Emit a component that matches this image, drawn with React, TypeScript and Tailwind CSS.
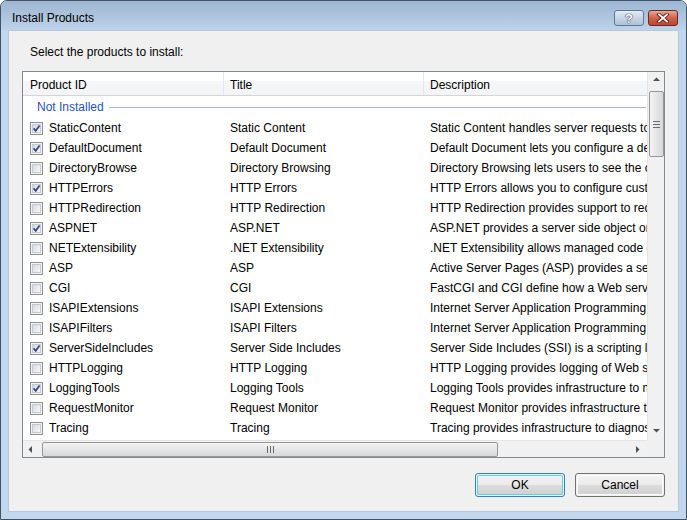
import React from 'react'

type Row = [string, string, string, boolean]

const rows: Row[] = [
  ['StaticContent', 'Static Content', 'Static Content handles server requests to static files', true],
  ['DefaultDocument', 'Default Document', 'Default Document lets you configure a default file', true],
  ['DirectoryBrowse', 'Directory Browsing', 'Directory Browsing lets users to see the contents', false],
  ['HTTPErrors', 'HTTP Errors', 'HTTP Errors allows you to configure custom error messages', true],
  ['HTTPRedirection', 'HTTP Redirection', 'HTTP Redirection provides support to redirect requests', false],
  ['ASPNET', 'ASP.NET', 'ASP.NET provides a server side object oriented environment', true],
  ['NETExtensibility', '.NET Extensibility', '.NET Extensibility allows managed code developers', false],
  ['ASP', 'ASP', 'Active Server Pages (ASP) provides a server side scripting', false],
  ['CGI', 'CGI', 'FastCGI and CGI define how a Web server passes data', false],
  ['ISAPIExtensions', 'ISAPI Extensions', 'Internet Server Application Programming Interface', false],
  ['ISAPIFilters', 'ISAPI Filters', 'Internet Server Application Programming Interface', false],
  ['ServerSideIncludes', 'Server Side Includes', 'Server Side Includes (SSI) is a scripting language', true],
  ['HTTPLogging', 'HTTP Logging', 'HTTP Logging provides logging of Web site activity', false],
  ['LoggingTools', 'Logging Tools', 'Logging Tools provides infrastructure to manage logs', true],
  ['RequestMonitor', 'Request Monitor', 'Request Monitor provides infrastructure to monitor', false],
  ['Tracing', 'Tracing', 'Tracing provides infrastructure to diagnose problems', false],
]

function Check({ on }: { on: boolean }) {
  return (
    <span className="block w-[13px] h-[13px] shrink-0 border border-[#8e8f8f] bg-[#f4f4f4] p-px">
      <span className="block w-full h-full border border-[#c6c9cf] bg-gradient-to-br from-[#d6d9de] to-[#f8f8f8]">
        {on && (
          <svg width="9" height="9" viewBox="0 0 9 9" className="-mt-px -ml-px">
            <path d="M1.6 4.4 L3.7 6.8 L7.6 1.4" fill="none" stroke="#32468a" strokeWidth="1.7" />
          </svg>
        )}
      </span>
    </span>
  )
}

function Arrow({ dir }: { dir: 'up' | 'down' | 'left' | 'right' }) {
  const pts = {
    up: '1,5 4.5,1.5 8,5',
    down: '1,2 4.5,5.5 8,2',
    left: '5,1 1.5,4.5 5,8',
    right: '2,1 5.5,4.5 2,8',
  }[dir]
  return (
    <span className="w-[17px] h-[17px] flex items-center justify-center shrink-0">
      <svg width="9" height="9" viewBox="0 0 9 9">
        <polygon points={pts} fill="#505050" />
      </svg>
    </span>
  )
}

function Btn({ label, def }: { label: string; def?: boolean }) {
  return (
    <div
      className={`w-[90px] h-[24px] rounded-[3px] border ${def ? 'border-[#3c7fb1]' : 'border-[#707070]'} p-px`}
    >
      <div
        className={`w-full h-full rounded-[2px] flex items-center justify-center bg-[linear-gradient(to_bottom,#f2f2f2_0%,#ebebeb_50%,#dddddd_50%,#cfcfcf_100%)] ${def ? 'shadow-[inset_0_0_0_1px_#48d8fb]' : 'shadow-[inset_0_0_0_1px_#fcfcfc]'}`}
      >
        {label}
      </div>
    </div>
  )
}

export default function App() {
  return (
    <div
      className="w-[687px] h-[520px] rounded-t-[7px] border border-[#3f5266] bg-[#c2d7ee] flex flex-col text-[12px] text-black overflow-hidden"
      style={{ fontFamily: '"Liberation Sans", Arial, sans-serif' }}
    >
      <div className="h-[29px] shrink-0 flex items-center justify-between pl-[11px] pr-[8px] bg-gradient-to-b from-[#9db5d1] to-[#bed3ea]">
        <span className="pt-[4px] text-[12px] text-black">Install Products</span>
        <div className="flex gap-[4px] mt-[5px]">
          <div className="w-[30px] h-[16px] rounded-[3px] border border-[#63788f] bg-gradient-to-b from-[#e3ebf4] via-[#c6d5e6] to-[#aec2d9] flex items-center justify-center">
            <span className="text-white font-bold text-[13px] leading-none [text-shadow:0_0_1px_#3a4b5e,0_0_1px_#3a4b5e,0_0_1px_#3a4b5e]">?</span>
          </div>
          <div className="w-[30px] h-[16px] rounded-[3px] border border-[#6e2a20] bg-gradient-to-b from-[#e9a898] via-[#d0614a] to-[#c0452f] flex items-center justify-center">
            <svg width="14" height="10" viewBox="0 0 14 10">
              <path d="M3 1.5 L11 8.5 M11 1.5 L3 8.5" stroke="#5b1d14" strokeWidth="3.6" strokeLinecap="square" />
              <path d="M3 1.5 L11 8.5 M11 1.5 L3 8.5" stroke="#ffffff" strokeWidth="1.8" strokeLinecap="square" />
            </svg>
          </div>
        </div>
      </div>

      <div className="flex-1 mx-[7px] mb-[7px] bg-[#f0f0f0] border border-[#b3c7dd] px-[13px] flex flex-col">
        <div className="h-[40px] pl-[8px] pt-[14px] leading-[14px]">Select the products to install:</div>

        <div className="h-[387px] border border-[#828790] bg-white grid grid-cols-[1fr_17px] grid-rows-[1fr_17px]">
          <div className="overflow-hidden">
            <div className="w-[900px]">
              <div className="h-[24px] flex border-b border-[#d5d5d5] bg-[linear-gradient(to_bottom,#ffffff_0%,#ffffff_40%,#f5f6f7_40%,#f3f4f6_100%)]">
                <div className="w-[201px] pl-[7px] pt-[2px] flex items-center border-r border-[#e3e8ee]">Product ID</div>
                <div className="w-[200px] pl-[6px] pt-[2px] flex items-center border-r border-[#e3e8ee]">Title</div>
                <div className="flex-1 pl-[6px] pt-[2px] flex items-center">Description</div>
              </div>
              <div className="h-[22px] flex items-center pl-[14px] w-[623px]">
                <span className="text-[#1f52c4]">Not Installed</span>
                <span className="flex-1 h-px bg-[#a7b9e1] ml-[5px]" />
              </div>
              {rows.map(([id, title, desc, on]) => (
                <div key={id} className="h-[20px] flex items-center whitespace-nowrap">
                  <div className="w-[200px] pl-[7px] flex items-center">
                    <Check on={on} />
                    <span className="ml-[6px]">{id}</span>
                  </div>
                  <div className="w-[200px] pl-[7px]">{title}</div>
                  <div className="flex-1 pl-[7px]">{desc}</div>
                </div>
              ))}
            </div>
          </div>

          <div className="bg-[#f1f1f1] border-l border-[#e4e4e4] flex flex-col items-center">
            <Arrow dir="up" />
            <div className="mt-[2px] w-[15px] h-[66px] rounded-[2px] border border-[#979797] bg-gradient-to-r from-[#f4f4f4] to-[#d8d8d8] flex flex-col items-center justify-center gap-[2px]">
              <span className="w-[7px] h-px bg-[#6a6a6a]" />
              <span className="w-[7px] h-px bg-[#6a6a6a]" />
              <span className="w-[7px] h-px bg-[#6a6a6a]" />
            </div>
            <div className="flex-1" />
            <Arrow dir="down" />
          </div>

          <div className="bg-[#f1f1f1] border-t border-[#e4e4e4] flex items-center">
            <Arrow dir="left" />
            <div className="ml-[2px] w-[456px] h-[15px] rounded-[2px] border border-[#979797] bg-gradient-to-b from-[#f4f4f4] to-[#d8d8d8] flex items-center justify-center gap-[2px]">
              <span className="w-px h-[7px] bg-[#6a6a6a]" />
              <span className="w-px h-[7px] bg-[#6a6a6a]" />
              <span className="w-px h-[7px] bg-[#6a6a6a]" />
            </div>
            <div className="flex-1" />
            <Arrow dir="right" />
          </div>
          <div className="bg-[#f0f0f0]" />
        </div>

        <div className="mt-[15px] flex justify-end gap-[10px]">
          <Btn label="OK" def />
          <Btn label="Cancel" />
        </div>
      </div>
    </div>
  )
}
